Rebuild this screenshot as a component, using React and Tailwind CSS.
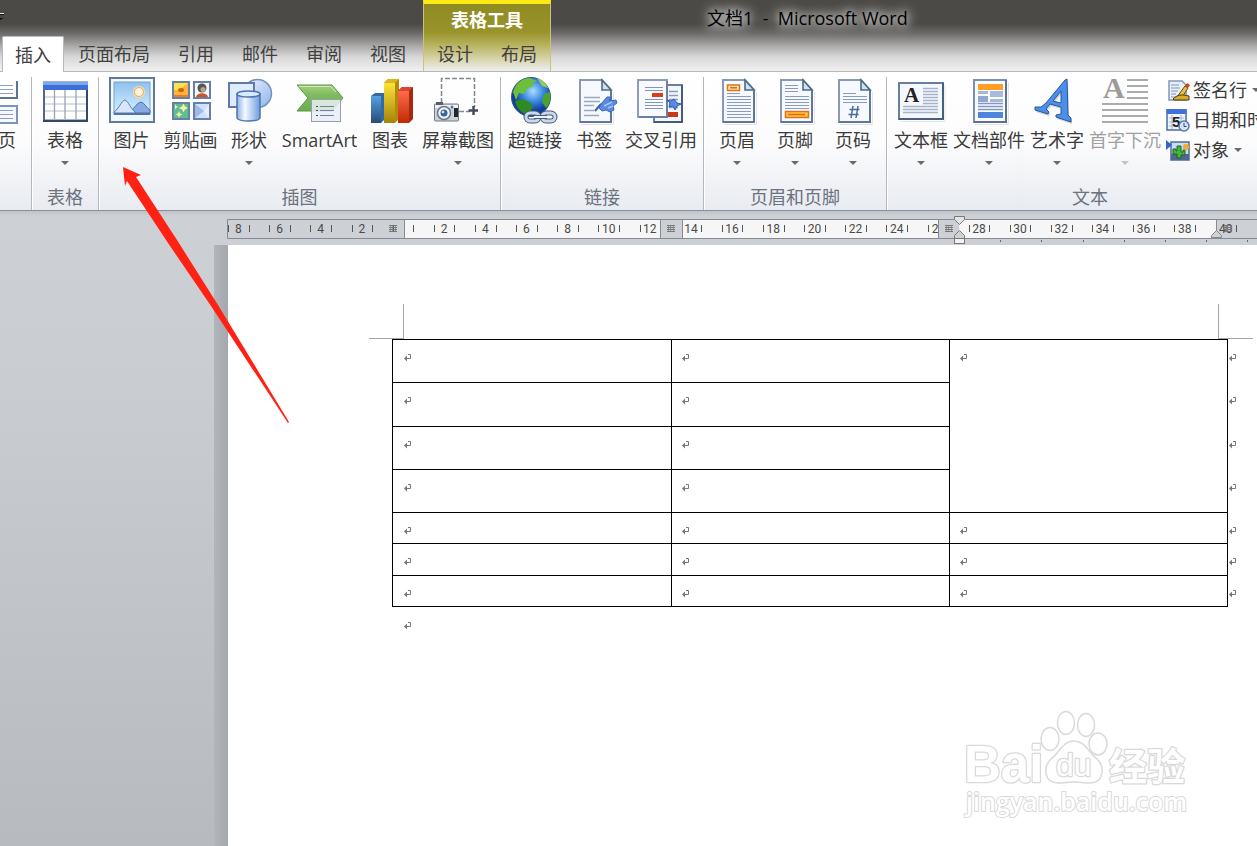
import React from "react";

const FONT = "font-['Open_Sans','Noto_Sans_CJK_SC',sans-serif]";

function Caret({ className = "" }) {
  return (
    <svg viewBox="0 0 8 4" className={`h-1 w-2 shrink-0 ${className}`} fill="currentColor" aria-hidden="true">
      <path d="M0 0h8L4 4z" />
    </svg>
  );
}

function Icon({ children }) {
  return (
    <svg viewBox="0 0 48 48" className="size-12 shrink-0 overflow-visible" aria-hidden="true">
      {children}
    </svg>
  );
}

function Lines({ x1, x2, from, to, step, stroke = "#8a9cbd", width = 1 }) {
  const out = [];
  for (let y = from; y <= to; y += step) {
    out.push(<line key={y} x1={x1} x2={x2} y1={y + 0.5} y2={y + 0.5} stroke={stroke} strokeWidth={width} />);
  }
  return <g>{out}</g>;
}

function Sheet() {
  return (
    <g>
      <path d="M11 47.500h32.500V15" fill="none" stroke="#e3e5e8" />
      <path d="M10 3h22l9 10v32H10z" fill="#f6f9ff" stroke="#8798b8" strokeWidth="2" />
      <path d="M41 14v31H10" fill="none" stroke="#60779a" strokeWidth="2" />
      <path d="M32 3v10h9z" fill="#cfe1f2" stroke="#4f6b86" strokeWidth="1.600" />
    </g>
  );
}

const icons = {
  table: (
    <Icon>
      <rect x="3" y="5.500" width="43" height="38" fill="#fff" stroke="#52678a" strokeWidth="2" />
      <rect x="2" y="5" width="45" height="8" fill="#3c6fd6" />
      <rect x="2" y="5" width="45" height="3" fill="#7ba6f0" />
      <path d="M4 20H45M4 27H45M4 34H45" stroke="#b5bccb" />
      <path d="M13.500 13V42M24 13V42M35 13V42" stroke="#98a3b8" strokeWidth="1.300" />
      <path d="M46 13V44H2" fill="none" stroke="#344967" strokeWidth="2" />
    </Icon>
  ),
  picture: (
    <Icon>
      <defs>
        <linearGradient id="sky" x1="0" y1="0" x2="0" y2="1">
          <stop offset="0" stopColor="#8fc0f0" />
          <stop offset="1" stopColor="#d6f3fd" />
        </linearGradient>
      </defs>
      <rect x="2" y="1" width="44" height="44" fill="#eefaff" stroke="#61799a" strokeWidth="2" />
      <rect x="6" y="5" width="36" height="32" fill="url(#sky)" stroke="#7ea0cd" />
      <circle cx="31" cy="15" r="6" fill="#fbd9a6" />
      <circle cx="31" cy="15" r="4.500" fill="#fff5dc" stroke="#f0a860" />
      <path d="M20 36C25 34 28 26 33 25C37 26 38 31 42 33V36z" fill="#88aae2" stroke="#4a6fae" />
      <path d="M6 35C11 32 13 24 17 23C21 25 22 31 28 36H6z" fill="#d8e6fb" stroke="#5878ad" />
      <path d="M6 37H42" stroke="#56729e" strokeWidth="2" />
    </Icon>
  ),
  clipart: (
    <Icon>
      <rect x="6" y="5" width="16" height="16" fill="#fbb53b" stroke="#6781a6" strokeWidth="2" />
      <path d="M7 6h14l-9 7H7z" fill="#ffe14b" />
      <ellipse cx="14" cy="13" rx="3" ry="2" fill="#d4600e" />
      <path d="M7 19h14" stroke="#ec7d21" strokeWidth="2" />
      <rect x="27" y="5" width="16" height="16" fill="#f4f7fb" stroke="#6781a6" strokeWidth="2" />
      <circle cx="35" cy="11" r="4.500" fill="#565656" />
      <circle cx="36" cy="12.500" r="2.500" fill="#b9a598" />
      <path d="M29 20c1-5 11-5 12 0z" fill="#c8561f" />
      <rect x="6" y="26" width="16" height="16" fill="#5dbf93" stroke="#6781a6" strokeWidth="2" />
      <path d="M16.500 26.500l1.500 3 3 1.500-3 1.500-1.500 3-1.500-3-3-1.500 3-1.500zM12 34l1 2.500 2.500 1L13 38.500 12 41l-1-2.500-2.500-1 2.500-1zM8 27l1 2 2 1-2 1-1 2z" fill="#fdf7a5" />
      <rect x="27" y="26" width="16" height="16" fill="#cfe0fb" stroke="#6781a6" strokeWidth="2" />
      <path d="M28 27l9 7-9 7z" fill="#9db9ee" />
      <path d="M42 27l-5 7 5 7z" fill="#e4eefd" />
    </Icon>
  ),
  shapes: (
    <Icon>
      <defs>
        <linearGradient id="cyl">
          <stop offset="0" stopColor="#8db3e8" />
          <stop offset="0.350" stopColor="#f4faff" />
          <stop offset="1" stopColor="#6f9be0" />
        </linearGradient>
        <linearGradient id="disc" x1="0" y1="0" x2="1" y2="1">
          <stop offset="0" stopColor="#eaf3ff" />
          <stop offset="1" stopColor="#8fb3ea" />
        </linearGradient>
      </defs>
      <circle cx="32.500" cy="16.500" r="14" fill="url(#disc)" stroke="#7592bd" strokeWidth="1.500" />
      <rect x="4" y="6" width="25" height="24" fill="#dfecfc" stroke="#5f7aa3" strokeWidth="2" />
      <path d="M12 17v24c2 4 21 4 23 0V17z" fill="url(#cyl)" stroke="#4f73aa" strokeWidth="1.500" />
      <ellipse cx="23.500" cy="17" rx="11.500" ry="3" fill="#dbe9fc" stroke="#4f73aa" strokeWidth="1.500" />
    </Icon>
  ),
  smartart: (
    <Icon>
      <defs>
        <linearGradient id="chev" x1="0" y1="0" x2="0" y2="1">
          <stop offset="0" stopColor="#a9d07f" />
          <stop offset="0.400" stopColor="#7dba5c" />
          <stop offset="1" stopColor="#6aae4c" />
        </linearGradient>
      </defs>
      <path d="M1 8H36L47 21L36 34H1L12 21z" fill="url(#chev)" stroke="#5b9747" />
      <path d="M3 9.500H35L40 15" fill="none" stroke="#d0e8b8" />
      <rect x="15.500" y="22.500" width="29" height="22" fill="#e9eef2" fillOpacity="0.860" stroke="#91a2b8" />
      <path d="M24 29.500H38M24 33.500H38M24 38.500H38" stroke="#6b83a6" />
      <path d="M20 29.500h2M20 33.500h2M20 38.500h2" stroke="#33507a" />
    </Icon>
  ),
  chart: (
    <Icon>
      <defs>
        <linearGradient id="bb" x1="0" y1="0" x2="0" y2="1"><stop offset="0" stopColor="#55a0e6" /><stop offset="1" stopColor="#2b4a73" /></linearGradient>
        <linearGradient id="by" x1="0" y1="0" x2="0" y2="1"><stop offset="0" stopColor="#fde23b" /><stop offset="1" stopColor="#a68208" /></linearGradient>
        <linearGradient id="br" x1="0" y1="0" x2="0" y2="1"><stop offset="0" stopColor="#ff6a4a" /><stop offset="1" stopColor="#c02a05" /></linearGradient>
      </defs>
      <path d="M5 19l4-3h9v27l-3 3H5z" fill="#2f6aa8" />
      <rect x="5" y="19" width="10" height="27" fill="url(#bb)" />
      <path d="M18 6l4-4h11v40l-4 4H18z" fill="#b38c04" />
      <path d="M18 6l4-4h11l-4 4z" fill="#d9b621" />
      <rect x="18" y="6" width="11" height="40" fill="url(#by)" />
      <path d="M32 14l4-4h11v32l-4 4H32z" fill="#a52a10" />
      <path d="M32 14l4-4h11l-4 4z" fill="#d8472b" />
      <rect x="32" y="14" width="11" height="32" fill="url(#br)" />
    </Icon>
  ),
  screenshot: (
    <Icon>
      <path d="M7.500 26V1.500H40.500V30M25 34.500h11" fill="none" stroke="#7e8793" strokeWidth="1.500" strokeDasharray="5 2" />
      <path d="M34.500 33.500H44M39.500 29V38" stroke="#444f5e" strokeWidth="2.500" />
      <rect x="0.500" y="27" width="24" height="17" rx="1" fill="#ccd2d9" stroke="#707a86" />
      <rect x="2" y="25" width="7" height="3" fill="#555e69" />
      <rect x="1" y="28" width="23" height="3" fill="#eef1f4" />
      <circle cx="10" cy="36" r="6.500" fill="#f2f5f8" stroke="#6b7683" strokeWidth="1.500" />
      <circle cx="10" cy="36" r="3.500" fill="#35669e" />
      <circle cx="9" cy="35" r="1.300" fill="#d5eafd" />
      <rect x="20" y="31" width="4" height="9" fill="#22272e" />
      <circle cx="18" cy="30" r="1.500" fill="#367ac0" />
    </Icon>
  ),
  link: (
    <Icon>
      <defs>
        <radialGradient id="globe" cx="0.550" cy="0.350">
          <stop offset="0" stopColor="#a9dcff" />
          <stop offset="0.550" stopColor="#3a87e0" />
          <stop offset="1" stopColor="#103f9b" />
        </radialGradient>
      </defs>
      <circle cx="20" cy="20" r="19.500" fill="url(#globe)" stroke="#2f5b86" />
      <path d="M2 15C5 6 11 1 19 1l7 3-5 2 2 3-6 2-4 6-5-1-3 7z" fill="#6cbf36" />
      <path d="M4 24l7-2 8 3 3 5-5 8c-8-2-12-8-13-14z" fill="#2f8a23" />
      <path d="M33 17l6-2c1 6 0 12-4 16l-4-6z" fill="#4da32a" />
      <path d="M26 1c5 2 9 5 11 10l-6-2z" fill="#8dd05a" />
      <g fill="none" stroke="#46597a" strokeWidth="5">
        <rect x="15" y="36" width="13" height="8" rx="4" />
        <rect x="31" y="36" width="13" height="8" rx="4" />
      </g>
      <g fill="none" stroke="#cbd8ec" strokeWidth="3">
        <rect x="15" y="36" width="13" height="8" rx="4" />
        <rect x="31" y="36" width="13" height="8" rx="4" />
      </g>
      <path d="M23 40h13" stroke="#46597a" strokeWidth="4" />
      <path d="M23 40h13" stroke="#e9f0fa" strokeWidth="2" />
    </Icon>
  ),
  bookmark: (
    <Icon>
      <Sheet />
      <Lines x1={14} x2={30} from={20} to={24} step={4} stroke="#9aa8bd" width={1.5} />
      <Lines x1={14} x2={24} from={28} to={34} step={5} stroke="#9aa8bd" width={1.5} />
      <path d="M14 38.500H29" stroke="#9aa8bd" strokeWidth="1.500" />
      <path d="M25 34L30 28L41 21" fill="none" stroke="#3c5f9f" strokeWidth="2" />
      <path d="M31 27l6-7h4l-2 4 7-1 1 3-4 3 1 4-4 2-4-2-4 1-3-3z" fill="#5b8ae0" stroke="#3d68bd" />
      <path d="M34 29l8-4M38 31l5-2" stroke="#a8c4f6" strokeWidth="1.500" />
    </Icon>
  ),
  crossref: (
    <Icon>
      <rect x="17" y="8" width="28" height="37" fill="#f3f6fc" stroke="#6b7fa3" strokeWidth="2" />
      <path d="M45 8V45H17" fill="none" stroke="#455b7e" strokeWidth="2" />
      <Lines x1={32} x2={41} from={14} to={30} step={4} stroke="#8a9cbd" width={1.5} />
      <rect x="30" y="35" width="11" height="5" fill="#c83a16" />
      <rect x="1" y="3" width="29" height="37" fill="#f8fafe" stroke="#8e9cbf" strokeWidth="2" />
      <path d="M30 4V40H2" fill="none" stroke="#60769a" strokeWidth="1.500" />
      <path d="M8 10.500H26M8 13.500H26M8 22.500H26M8 25.500H26M8 28.500H26M8 31.500H26" stroke="#8296bb" />
      <rect x="15" y="16" width="11" height="4" fill="#dd3b19" />
      <path d="M30 23l4 1 3-2 3 4 4 1-4 2-2 4-2-4-4 1 1-4z" fill="#5c8be6" stroke="#2d59b2" />
    </Icon>
  ),
  header: (
    <Icon>
      <Sheet />
      <Lines x1={14} x2={38} from={19} to={40} step={3} />
      <path d="M14 16.500H27" stroke="#8a9cbd" />
      <rect x="14.500" y="8" width="12" height="5.500" fill="#ffe9a6" stroke="#dc7418" strokeWidth="1.500" />
      <path d="M17 10.800H24" stroke="#e4640a" strokeWidth="1.500" />
    </Icon>
  ),
  footer: (
    <Icon>
      <Sheet />
      <path d="M14 8.500H27M14 11.500H27M14 14.500H27" stroke="#8a9cbd" />
      <Lines x1={14} x2={38} from={19} to={31} step={3} />
      <rect x="14.500" y="34.500" width="23" height="6" fill="#ffc445" stroke="#dc7418" strokeWidth="1.500" />
      <path d="M17 37.500H34" stroke="#e4640a" strokeWidth="1.500" />
    </Icon>
  ),
  pagenum: (
    <Icon>
      <Sheet />
      <path d="M14 16.500H27M14 19.500H38M14 22.500H38M14 25.500H38" stroke="#8a9cbd" />
      <path d="M24 29l-2 12M29 29l-2 12M20.500 32.500h10M19.500 37.500h10" stroke="#4a6a9e" strokeWidth="1.500" />
    </Icon>
  ),
  textbox: (
    <Icon>
      <path d="M3 44.500H48V8" fill="none" stroke="#e3e5e8" />
      <rect x="2" y="6" width="44" height="36" fill="#f4f8fe" stroke="#667e9f" strokeWidth="2" />
      <path d="M46 6V42H2" fill="none" stroke="#45607f" strokeWidth="2" />
      <text x="7" y="25" fontSize="21" fontWeight="700" fill="#222" className="font-['Liberation_Serif',serif]">A</text>
      <Lines x1={26} x2={41} from={11} to={26} step={3} stroke="#a6b4c9" width={1.5} />
      <Lines x1={6} x2={41} from={29} to={35} step={3} stroke="#a6b4c9" width={1.5} />
    </Icon>
  ),
  parts: (
    <Icon>
      <path d="M10 47.500H43.500V5" fill="none" stroke="#e3e5e8" />
      <rect x="9" y="3" width="32" height="42" fill="#f8fbff" stroke="#7b8fb0" strokeWidth="2" />
      <path d="M41 3V45H9" fill="none" stroke="#5b7294" strokeWidth="2" />
      <rect x="13" y="7" width="25" height="6" fill="#ff9d25" />
      <rect x="13" y="14" width="10" height="3" fill="#a9b9d3" />
      <rect x="13" y="19" width="10" height="6" fill="#93a8ce" />
      <rect x="25" y="14" width="13" height="6" fill="#aabbd9" />
      <rect x="25" y="22" width="13" height="3" fill="#a9b9d3" />
      <Lines x1={13} x2={38} from={26} to={32} step={3} stroke="#8397bf" width={1.5} />
      <rect x="13" y="35" width="25" height="6" fill="#4f86dc" />
    </Icon>
  ),
  wordart: (
    <Icon>
      <defs>
        <path id="slanted-a" d="M2 30L8 30L13 26L32 3L34 2L35 38L38 41V45L23 40V38L28 37L28 30L17 27L13 32L16 35L15 37L2 33zM20 24L28 26V14z" />
      </defs>
      <use href="#slanted-a" fill="#cdd0d5" x="1" y="2" />
      <use href="#slanted-a" fill="#4a90ea" stroke="#2a579b" fillRule="evenodd" />
    </Icon>
  ),
  dropcap: (
    <Icon>
      <text x="2" y="21" fontSize="30" fontWeight="700" fill="#9b9b9b" className="font-['Liberation_Serif',serif]">A</text>
      <path d="M26 3H47M26 9H47M26 15H47M26 21H47M1 27H47M1 33H47M1 39H47M1 45H47" stroke="#ababab" strokeWidth="2" />
    </Icon>
  ),
};

function BigButton({ icon, label, caret, disabled, width }) {
  return (
    <button
      type="button"
      disabled={disabled}
      className={`flex shrink-0 flex-col items-center ${width} ${disabled ? "text-[#a0a0a0]" : "text-[#3b3b3b]"}`}
    >
      {icons[icon]}
      <span className="mt-[3px] h-6 text-lg leading-6 whitespace-nowrap">{label}</span>
      {caret && <Caret className={`mt-[9px] ${disabled ? "text-[#c4c4c8]" : "text-[#6a6a6a]"}`} />}
    </button>
  );
}

function Group({ label, children, className = "" }) {
  return (
    <section className={`flex shrink-0 flex-col justify-between border-r border-[#b4b8be] pb-px shadow-[1px_0_0_#fff] ${className}`}>
      <div className="flex">{children}</div>
      <h2 className="text-center text-lg leading-6 text-[#6b7280]">{label}</h2>
    </section>
  );
}

function SmallButton({ children, label, caret }) {
  return (
    <button type="button" className="flex h-[30px] items-center gap-[3px] text-lg leading-6 whitespace-nowrap text-[#3b3b3b]">
      <svg viewBox="0 0 24 24" className="size-6 shrink-0" aria-hidden="true">{children}</svg>
      {label}
      {caret && <Caret className="ml-0.5 text-[#6a6a6a]" />}
    </button>
  );
}

function Tab({ label, active }) {
  return (
    <button
      type="button"
      role="tab"
      aria-selected={!!active}
      className={`h-9 text-lg leading-6 whitespace-nowrap text-[#404040] ${
        active ? "rounded-t-xs border border-b-0 border-[#b9bcc0] bg-white px-3" : "px-[14px]"
      }`}
    >
      {label}
    </button>
  );
}

function TitleBar() {
  return (
    <header className="flex h-[72px] border-b border-[#b5b7ba] bg-[linear-gradient(#4b4a47_0px,#4b4a47_24px,#6a6967_33px,#a6a5a4_45px,#d9d8d8_57px,#efefef_70px)]">
      <div role="tablist" className="-mb-px flex shrink-0 items-end pr-[3px] pl-[2px]">
        <Tab label="插入" active />
        <Tab label="页面布局" />
        <Tab label="引用" />
        <Tab label="邮件" />
        <Tab label="审阅" />
        <Tab label="视图" />
      </div>
      <div className="flex w-[128px] shrink-0 flex-col justify-between border-x border-[#c9c477] border-t-4 border-t-[#fdea14] bg-[linear-gradient(#8f8b22_0px,#98932a_28px,#b5b05a_40px,#d5d2a6_54px,#efefef_67px)]">
        <div className="pt-1 text-center text-lg leading-6 font-bold text-white">表格工具</div>
        <div role="tablist" className="-mb-px flex justify-center">
          <Tab label="设计" />
          <Tab label="布局" />
        </div>
      </div>
      <h1 className="min-w-0 flex-1 overflow-hidden pt-1.5 pl-[156px] text-lg leading-6 whitespace-pre text-black [text-shadow:0_0_8px_rgba(255,255,255,0.8),0_0_12px_rgba(255,255,255,0.8),0_0_16px_rgba(255,255,255,0.6)]">
        文档1  -  Microsoft Word
      </h1>
    </header>
  );
}

function Ribbon() {
  return (
    <div className="flex h-[139px] overflow-hidden border-b border-[#8a8f98] bg-[linear-gradient(#ffffff_0px,#fcfcfd_70px,#e8ebf0_138px)] pt-[5px]">
      <section className="flex w-8 shrink-0 justify-end border-r border-[#b4b8be] shadow-[1px_0_0_#fff]">
        <button type="button" aria-label="分页" className="flex w-full flex-col items-start text-[#3b3b3b]">
          <svg viewBox="0 0 20 48" className="h-12 w-5" aria-hidden="true">
            <path d="M0 21H17V4" fill="none" stroke="#5b7294" strokeWidth="2" />
            <path d="M0 29H17V46H0" fill="#f5f8fe" stroke="#7f94b4" strokeWidth="2" />
            <path d="M0 8.500H13M0 12.500H13M0 16.500H13M0 33.500H13M0 37.500H13M0 41.500H13" stroke="#8b9fc0" />
          </svg>
          <span className="mt-[3px] -ml-0.5 h-6 text-lg leading-6">页</span>
        </button>
      </section>
      <Group label="表格" className="px-[3px]">
        <BigButton icon="table" label="表格" caret width="w-[60px]" />
      </Group>
      <Group label="插图" className="px-[3px]">
        <BigButton icon="picture" label="图片" width="w-[59px]" />
        <BigButton icon="clipart" label="剪贴画" width="w-[59px]" />
        <BigButton icon="shapes" label="形状" caret width="w-[58px]" />
        <BigButton icon="smartart" label="SmartArt" width="w-[83px]" />
        <BigButton icon="chart" label="图表" width="w-[58px]" />
        <BigButton icon="screenshot" label="屏幕截图" caret width="w-[78px]" />
      </Group>
      <Group label="链接" className="px-1">
        <BigButton icon="link" label="超链接" width="w-[60px]" />
        <BigButton icon="bookmark" label="书签" width="w-[58px]" />
        <BigButton icon="crossref" label="交叉引用" width="w-[76px]" />
      </Group>
      <Group label="页眉和页脚" className="px-1">
        <BigButton icon="header" label="页眉" caret width="w-[58px]" />
        <BigButton icon="footer" label="页脚" caret width="w-[58px]" />
        <BigButton icon="pagenum" label="页码" caret width="w-[58px]" />
      </Group>
      <Group label="文本" className="pr-[3px] pl-1">
        <BigButton icon="textbox" label="文本框" caret width="w-[60px]" />
        <BigButton icon="parts" label="文档部件" caret width="w-[76px]" />
        <BigButton icon="wordart" label="艺术字" caret width="w-[60px]" />
        <BigButton icon="dropcap" label="首字下沉" caret disabled width="w-[76px]" />
        <div className="-mt-0.5 flex w-[126px] flex-col pl-[3px]">
          <SmallButton label="签名行" caret>
            <path d="M3 3h13l4 4v15H3z" fill="#e8eff9" stroke="#8196b8" strokeWidth="1.500" />
            <path d="M5 7h8M5 10h9M5 13h7M5 16h5M5 19h5" stroke="#7f96bb" />
            <path d="M11 19L19 8l3 2-7 11z" fill="#e8c03b" stroke="#5a4a1a" />
            <path d="M19 8l2-3 3 2-2 3z" fill="#cc4126" />
            <path d="M7 21c4-4 8-5 16-3v4H8z" fill="#d9ad2b" stroke="#453b1c" />
          </SmallButton>
          <SmallButton label="日期和时间">
            <rect x="1" y="2" width="19" height="20" fill="#eef4fc" stroke="#4f6c9c" strokeWidth="1.500" />
            <rect x="0.500" y="1" width="20" height="5" fill="#3d71dc" />
            <path d="M3 10h15M3 14h15M3 18h15M6 7v14M15 7v14" stroke="#a6b7d1" />
            <text x="6" y="19" fontSize="15" fontWeight="700" fill="#222" className="font-['Liberation_Sans',sans-serif]">5</text>
            <circle cx="18" cy="18" r="5" fill="#d7e5fb" stroke="#5377b5" strokeWidth="1.500" />
            <path d="M18 15v3.500h2.500" fill="none" stroke="#345" />
          </SmallButton>
          <SmallButton label="对象" caret>
            <rect x="5" y="4" width="18" height="18" fill="#c5dcf5" stroke="#4d6b95" strokeWidth="1.500" />
            <rect x="5" y="16" width="18" height="6" fill="#50688f" />
            <path d="M0 2l6 5-6 5z" fill="#3064c8" />
            <path d="M11 20v-4H7v-5h3v2h1V8h4v6h2v-2h2v5h-4v3z" fill="#45b33e" stroke="#1c6420" />
            <circle cx="20" cy="9" r="3" fill="#f2ac2c" />
          </SmallButton>
        </div>
      </Group>
    </div>
  );
}

function GridGlyph({ x }) {
  return (
    <g stroke="#777" transform={`translate(${x - 4} 6)`} shapeRendering="crispEdges">
      <path d="M0 0.500h8M0 2.500h8M0 4.500h8M0 6.500h8" />
      <path d="M1.500 0v7M3.500 0v7M6.500 0v7" strokeOpacity="0.600" />
    </g>
  );
}

function Ruler() {
  const unit = 20.57;
  const origin = 176;
  const numbers = [];
  for (let n = -8; n <= 40; n += 2) if (n !== 0) numbers.push(n);
  const ticks = [];
  for (let k = -9; k <= 41; k += 1) ticks.push(Math.round(origin + unit * (k + 0.5)) + 0.5);
  return (
    <div className="mt-2 ml-[227px]">
      <svg className="block h-[26px] w-full overflow-visible" role="img" aria-label="标尺">
        <rect x="0.500" y="0.500" width="1200" height="19" fill="#cdd0d5" />
        <rect x="177" y="1" width="257" height="18" fill="#f6f6f6" />
        <rect x="455" y="1" width="257" height="18" fill="#f6f6f6" />
        <rect x="732" y="1" width="257" height="18" fill="#f6f6f6" />
        {ticks.filter((x) => x < 432 || (x > 458 && x < 711) || x > 734).map((x) => (
          <line key={x} x1={x} x2={x} y1="6" y2="13" stroke="#555" />
        ))}
        <g fontSize="12" fill="#4a4a4a" textAnchor="middle" className="font-['Roboto',sans-serif]">
          {numbers.filter((n) => n !== 26).map((n) => (
            <text key={n} x={origin + unit * n} y="14">{Math.abs(n)}</text>
          ))}
          <text x="708" y="14">2</text>
        </g>
        <path d="M0.500 19.500V0.500H1200M0.500 19.500H1200M177.500 0V20M433.500 0V20M455.500 0V20M711.500 0V20M989.500 0V20" fill="none" stroke="#858a93" />
        <GridGlyph x={166} />
        <GridGlyph x={444} />
        <GridGlyph x={722} />
        <GridGlyph x={1001} />
        <path d="M773.500 21v2M814.500 21v2M856.500 21v2M897.500 21v2M938.500 21v2M979.500 21v2M1020.500 21v2" stroke="#666" />
        <path d="M727.500 -2.500h10v3l-5 5-5-5z" fill="#e4e4e4" stroke="#777" />
        <path d="M727.500 19.500v-3l5-5 5 5v3z" fill="#d2d2d2" stroke="#777" />
        <rect x="727.500" y="19.500" width="10" height="5" fill="#f2f2f2" stroke="#777" />
        <path d="M984.500 18.500v-2l5-5 5 5v2z" fill="#d2d2d2" stroke="#888" />
      </svg>
    </div>
  );
}

function Mark() {
  return (
    <svg viewBox="0 0 8 8" className="block h-2 w-2" aria-hidden="true">
      <path d="M4 0.500H6.500V4.500H2" fill="none" stroke="#777" />
      <path d="M0 4.500L3 1.500v6z" fill="#777" />
    </svg>
  );
}

const rowHeights = ["h-[43px]", "h-[44px]", "h-[43px]", "h-[43px]", "h-[31px]", "h-8", "h-[31px]"];

function DocTable() {
  return (
    <table className="ml-[164px] w-[856px] table-fixed border-collapse">
      <colgroup>
        <col className="w-[279px]" />
        <col className="w-[278px]" />
        <col className="w-[278px]" />
        <col />
      </colgroup>
      <tbody>
        {rowHeights.map((h, r) => (
          <tr key={r} className={h}>
            <td className="border border-black pt-[14px] pl-[11px] align-top"><Mark /></td>
            <td className="border border-black pt-[14px] pl-[10px] align-top"><Mark /></td>
            {(r === 0 || r > 3) && (
              <td rowSpan={r === 0 ? 4 : 1} className="border border-black pt-[14px] pl-[10px] align-top"><Mark /></td>
            )}
            <td className="pt-[14px] pl-px align-top"><Mark /></td>
          </tr>
        ))}
      </tbody>
    </table>
  );
}

function Watermark() {
  return (
    <svg viewBox="0 0 250 120" className="pointer-events-none absolute right-14 bottom-[21px] h-[120px] w-[250px]" role="img" aria-label="Baidu 经验 jingyan.baidu.com">
      <g fill="#fff" stroke="#d9d9d9" strokeWidth="1.500" strokeLinejoin="round">
        <g strokeWidth="2.500" fontWeight="700" style={{ paintOrder: "stroke" }}>
          <text x="13" y="77" fontSize="51" className="font-['Liberation_Sans',sans-serif]">Bai</text>
          <text x="158" y="75" fontSize="38" className="font-['Noto_Sans_CJK_SC',sans-serif]">经验</text>
          <text x="15" y="106" fontSize="25" fontWeight="600" strokeWidth="2" className="font-['Open_Sans',sans-serif]">jingyan.baidu.com</text>
        </g>
        <ellipse cx="99" cy="34" rx="9" ry="11.500" />
        <ellipse cx="115" cy="18" rx="8.500" ry="11.500" />
        <ellipse cx="135" cy="20" rx="8.500" ry="11.500" />
        <ellipse cx="147" cy="39" rx="9" ry="11" />
        <path d="M123 36c11 0 14 11 23 18 9 9 6 24-7 24-6 0-10-1-16-1s-10 1-16 1c-13 0-16-15-7-24 9-7 12-18 23-18z" />
        <text x="105" y="71" fontSize="32" strokeWidth="2.500" style={{ paintOrder: "stroke" }} className="font-['Liberation_Sans',sans-serif]">du</text>
      </g>
    </svg>
  );
}

function Pointer() {
  return (
    <svg viewBox="0 0 170 260" className="pointer-events-none absolute top-[165px] left-[121px] h-[260px] w-[170px]" aria-hidden="true">
      <path d="M2 2L20 10L15 12L56 75L97 140L168 257L167 258L90 141L47 78L6 16L4 21z" fill="#ff2114" />
    </svg>
  );
}

function QuickAccessMore() {
  return (
    <button type="button" aria-label="自定义快速访问工具栏" className="absolute top-[13px] left-0 h-2 w-1">
      <svg viewBox="0 0 4 8" className="block h-2 w-1" aria-hidden="true">
        <path d="M0 0.500h4" stroke="#e8e8e8" />
        <path d="M0 1.500h4M0 5.500h3M0 6.500h1" stroke="#111" />
      </svg>
    </button>
  );
}

export default function App() {
  return (
    <div className={`relative flex min-h-screen flex-col overflow-hidden ${FONT}`}>
      <TitleBar />
      <QuickAccessMore />
      <Ribbon />
      <main className="flex flex-1 flex-col bg-[linear-gradient(#c0c3c8_0px,#cdd0d5_5px,#c9ccd1_180px,#b7babf_100%)]">
        <Ruler />
        <div className="flex flex-1 pl-[214px]">
          <div className="w-[14px] shrink-0 bg-linear-to-r from-[#b2b5b9] to-[#a4a8ad]" />
          <article className="relative min-w-0 flex-1 overflow-hidden bg-white pt-[59px]">
            <div className="ml-[141px] flex h-[35px] w-[884px] justify-between">
              <div className="w-[35px] border-r border-b border-[#a6a6a6]" />
              <div className="w-[35px] border-b border-l border-[#a6a6a6]" />
            </div>
            <DocTable />
            <div className="mt-[15px] ml-[176px]"><Mark /></div>
            <Watermark />
          </article>
        </div>
      </main>
      <Pointer />
    </div>
  );
}
